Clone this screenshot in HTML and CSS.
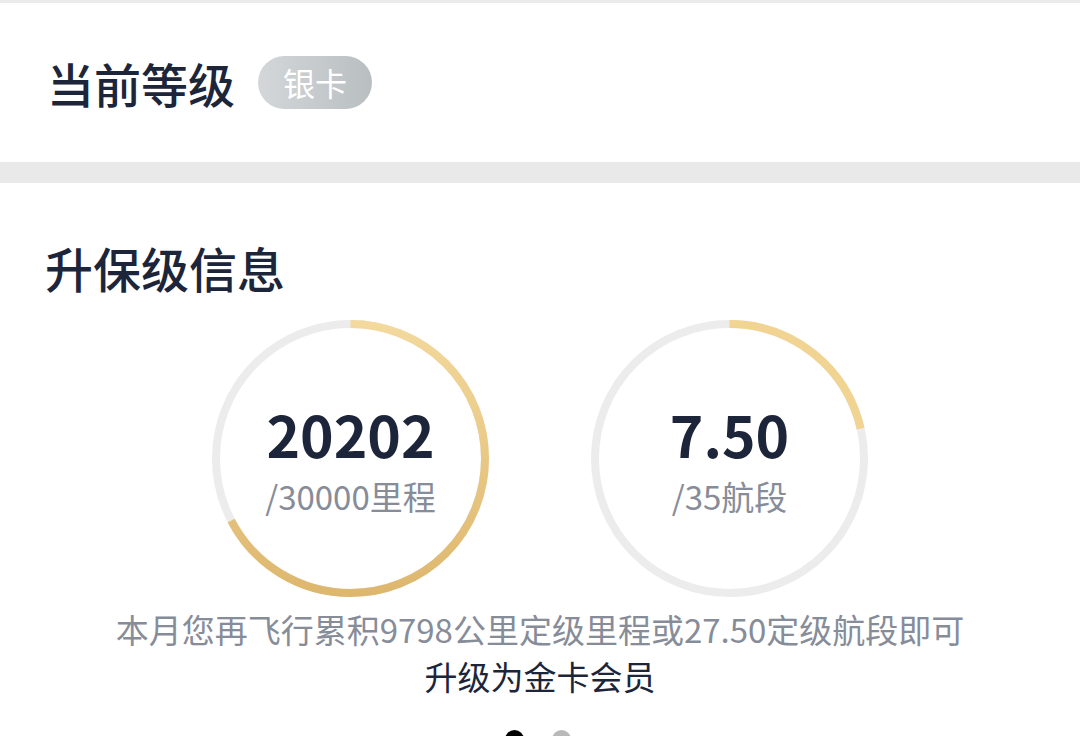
FILE: index.html
```html
<!DOCTYPE html>
<html lang="zh-CN">
<head>
<meta charset="utf-8">
<title>会员等级</title>
<link rel="stylesheet" href="styles.css">
</head>
<body>
<div class="topline"></div>
<section class="level">
  <h1 class="title">当前等级</h1>
  <span class="badge">银卡</span>
</section>
<div class="divider"></div>
<section class="upgrade">
  <h2 class="title">升保级信息</h2>
  <div class="rings">
    <div class="ring">
      <svg class="ring-svg" width="277" height="277" viewBox="0 0 277 277">
        <defs>
          <linearGradient id="goldA" x1="1" y1="0" x2="0" y2="0">
            <stop offset="0" stop-color="#f3d99c"/>
            <stop offset="1" stop-color="#deb76e"/>
          </linearGradient>
        </defs>
        <circle cx="138.5" cy="138.5" r="134.5" fill="none" stroke="#ececec" stroke-width="8"/>
        <circle cx="138.5" cy="138.5" r="134.5" fill="none" stroke="url(#goldA)" stroke-width="8" stroke-dasharray="569.1 845.1" transform="rotate(-90 138.5 138.5)"/>
      </svg>
      <div class="ring-text">
        <div class="num">20202</div>
        <div class="unit">/30000里程</div>
      </div>
    </div>
    <div class="ring">
      <svg class="ring-svg" width="277" height="277" viewBox="0 0 277 277">
        <circle cx="138.5" cy="138.5" r="134.5" fill="none" stroke="#ececec" stroke-width="8"/>
        <circle cx="138.5" cy="138.5" r="134.5" fill="none" stroke="#f1d491" stroke-width="8" stroke-dasharray="181.1 845.1" transform="rotate(-90 138.5 138.5)"/>
      </svg>
      <div class="ring-text">
        <div class="num">7.50</div>
        <div class="unit">/35航段</div>
      </div>
    </div>
  </div>
  <p class="note"><span class="muted">本月您再飞行累积9798公里定级里程或27.50定级航段即可</span><br><span class="strong">升级为金卡会员</span></p>
  <div class="dots"><span class="dot active"></span><span class="dot"></span></div>
</section>
</body>
</html>
```

FILE: styles.css
```css
html, body {
  margin: 0;
  padding: 0;
  background: #ffffff;
  font-family: "Noto Sans CJK SC", "Noto Sans", sans-serif;
  color: #1c2539;
  overflow: hidden;
}

.topline {
  height: 3px;
  background: #ebebeb;
}

.level {
  height: 159px;
  display: flex;
  align-items: center;
  padding-left: 47px;
}

.title {
  margin: 0;
  font-size: 47px;
  line-height: 47px;
  font-weight: 500;
  color: #1c2539;
}

.badge {
  margin-left: 23px;
  width: 114px;
  height: 53px;
  border-radius: 27px;
  background: linear-gradient(90deg, #d3d7d9 0%, #b9bec1 100%);
  color: #ffffff;
  font-size: 32px;
  line-height: 53px;
  text-align: center;
}

.divider {
  height: 21px;
  background: #e9e9e9;
}

.upgrade {
  padding: 60px 0 0 0;
}

.upgrade .title {
  padding-left: 45px;
  font-size: 48px;
  line-height: 48px;
}

.rings {
  margin-top: 29px;
  display: flex;
  justify-content: center;
  gap: 102px;
}

.ring {
  width: 277px;
  height: 277px;
  display: grid;
}

.ring-svg,
.ring-text {
  grid-area: 1 / 1;
}

.ring-text {
  display: flex;
  flex-direction: column;
  align-items: center;
  padding-top: 75px;
}

.num {
  font-size: 57px;
  line-height: 76px;
  font-weight: 700;
  color: #1c2539;
}

.unit {
  font-size: 33px;
  line-height: 44px;
  color: #878c99;
  margin-top: 3px;
}

.note {
  margin: 9px 0 0 0;
  text-align: center;
  font-size: 33px;
  line-height: 47px;
}

.muted {
  color: #878c99;
}

.strong {
  color: #1c2539;
}

.dots {
  margin-top: 30px;
  display: flex;
  justify-content: center;
  gap: 28px;
  padding-right: 4px;
}

.dot {
  width: 19px;
  height: 19px;
  border-radius: 50%;
  background: #b9b9b9;
}

.dot.active {
  background: #000000;
}
```
